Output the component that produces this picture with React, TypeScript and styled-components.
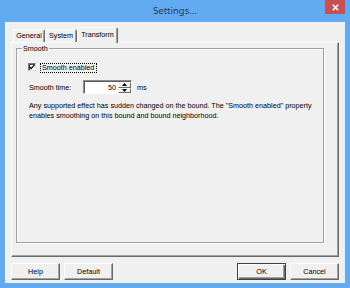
import React from "react";
import styled, { createGlobalStyle, css } from "styled-components";

const Global = createGlobalStyle`
  html, body { margin: 0; padding: 0; }
  body {
    width: 350px;
    height: 288px;
    overflow: hidden;
    font-family: "Liberation Sans", Arial, sans-serif;
  }
`;

const Window = styled.div`
  width: 350px;
  height: 288px;
  box-sizing: border-box;
  background: #62abf2;
  padding: 0 5px 5px;
  display: flex;
  flex-direction: column;
`;

const TitleBar = styled.div`
  height: 22px;
  flex: none;
  display: grid;
  grid-template-columns: 1fr auto 1fr;
  align-items: start;
`;

const Title = styled.div`
  grid-column: 2;
  font-family: "Noto Sans", "Liberation Sans", sans-serif;
  font-size: 9.5px;
  line-height: 21px;
  color: #27374e;
`;

const CloseButton = styled.button`
  grid-column: 3;
  justify-self: end;
  width: 20px;
  height: 14px;
  border: 0;
  padding: 0;
  margin: 0;
  background: #c75050;
  display: flex;
  align-items: center;
  justify-content: center;
`;

const Client = styled.div`
  flex: 1;
  min-height: 0;
  background: #f0f0f0;
  display: flex;
  flex-direction: column;
  padding: 0 6px 3px;
`;

const TabStrip = styled.div`
  height: 20px;
  flex: none;
  display: flex;
  align-items: flex-end;
  padding-left: 2px;
  position: relative;
  z-index: 1;
`;

const Tab = styled.div<{ $active?: boolean; $w: number }>`
  box-sizing: border-box;
  width: ${(p) => p.$w}px;
  height: ${(p) => (p.$active ? 16 : 13)}px;
  margin-bottom: ${(p) => (p.$active ? -1 : 0)}px;
  background: #f0f0f0;
  border-top: 1px solid #fff;
  border-left: 1px solid #fff;
  border-right: 1px solid #696969;
  box-shadow: inset -1px 0 #a0a0a0;
  border-radius: 2px 2px 0 0;
  font-size: 7.2px;
  line-height: ${(p) => (p.$active ? 13 : 12)}px;
  text-align: center;
  white-space: nowrap;
  color: #000;
`;

const Panel = styled.div`
  flex: 1;
  min-height: 0;
  box-sizing: border-box;
  border-top: 1px solid #fff;
  border-left: 1px solid #fff;
  border-right: 1px solid #696969;
  border-bottom: 1px solid #696969;
  box-shadow: inset -1px -1px #a0a0a0;
  display: flex;
  flex-direction: column;
  padding: 1px 14px 13px 4px;
`;

const GroupBox = styled.fieldset`
  flex: 1;
  margin: 0;
  padding: 0;
  min-width: 0;
  border: 1px solid #a0a0a0;
  box-shadow: inset 1px 1px #fff, 1px 1px #fff;
`;

const Legend = styled.legend`
  font-size: 7.2px;
  line-height: 9px;
  padding: 0 1px;
  margin-left: 5px;
  background: #f0f0f0;
  white-space: nowrap;
  color: #000;
`;

const Content = styled.div`
  display: flex;
  flex-direction: column;
  align-items: flex-start;
  padding: 10px 0 0 11px;
  font-size: 7.2px;
  white-space: nowrap;
  color: #000;
`;

const CheckRow = styled.div`
  display: flex;
  align-items: flex-start;
  gap: 4px;
`;

const CheckBox = styled.span`
  flex: none;
  width: 8px;
  height: 8px;
  box-sizing: border-box;
  background: #fff;
  border: 1px solid;
  border-color: #7a7a7a #dcdcdc #dcdcdc #7a7a7a;
  box-shadow: inset 1px 1px #4a4a4a;
  display: flex;
  align-items: center;
  justify-content: center;
`;

const FocusLabel = styled.span`
  flex: none;
  display: inline-block;
  border: 1px dotted #000;
  padding: 0 2px 0 1px;
  line-height: 8px;
`;

const SpinRow = styled.div`
  display: flex;
  align-items: center;
  margin-top: 7px;
  height: 14px;
`;

const FieldLabel = styled.span`
  flex: none;
  width: 54px;
  margin-left: 1px;
`;

const SpinEdit = styled.div`
  flex: none;
  width: 49px;
  height: 14px;
  box-sizing: border-box;
  display: flex;
  background: #fff;
  border: 1px solid;
  border-color: #8c8c8c #fff #fff #8c8c8c;
  box-shadow: inset 1px 1px #5a5a5a;
  padding: 1px 0 0 1px;
`;

const SpinValue = styled.span`
  flex: 1;
  text-align: right;
  line-height: 11px;
  padding-right: 2px;
`;

const SpinButtons = styled.div`
  width: 13px;
  display: flex;
  flex-direction: column;
`;

const SpinButton = styled.span`
  flex: 1;
  box-sizing: border-box;
  background: #f0f0f0;
  border-top: 1px solid #fff;
  border-left: 1px solid #fff;
  border-right: 1px solid #696969;
  border-bottom: 1px solid #696969;
  display: flex;
  align-items: center;
  justify-content: center;
`;

const Unit = styled.span`
  margin-left: 5px;
`;

const Description = styled.p`
  margin: 7px 0 0 1px;
  line-height: 10px;
`;

const ButtonRow = styled.div`
  display: flex;
  gap: 4px;
  margin-top: 6px;
  height: 17px;
  flex: none;
`;

const Spacer = styled.div`
  flex: 1;
`;

const Button = styled.button<{ $default?: boolean }>`
  width: 49px;
  height: 17px;
  box-sizing: border-box;
  padding: 0;
  margin: 0;
  font-family: "Liberation Sans", Arial, sans-serif;
  font-size: 7.2px;
  color: #000;
  background: #f0f0f0;
  border: 1px solid;
  border-color: #fff #696969 #696969 #fff;
  box-shadow: inset -1px -1px #a0a0a0;
  ${(p) =>
    p.$default &&
    css`
      border-color: #404040;
      box-shadow: inset 1px 1px #fff, inset -1px -1px #696969, inset -2px -2px #a0a0a0;
    `}
`;

const Arrow = ({ up }: { up?: boolean }) => (
  <svg width="5" height="3" viewBox="0 0 5 3">
    <polygon points={up ? "2.5,0 5,3 0,3" : "0,0 5,0 2.5,3"} fill="#000" />
  </svg>
);

export default function App() {
  return (
    <>
      <Global />
      <Window>
        <TitleBar>
          <Title>Settings...</Title>
          <CloseButton aria-label="Close">
            <svg width="7" height="7" viewBox="0 0 7 7">
              <path d="M0.8 0.8 L6.2 6.2 M6.2 0.8 L0.8 6.2" stroke="#fff" strokeWidth="1.6" />
            </svg>
          </CloseButton>
        </TitleBar>
        <Client>
          <TabStrip>
            <Tab $w={32}>General</Tab>
            <Tab $w={32}>System</Tab>
            <Tab $w={41} $active>
              Transform
            </Tab>
          </TabStrip>
          <Panel>
            <GroupBox>
              <Legend>Smooth</Legend>
              <Content>
                <CheckRow>
                  <CheckBox>
                    <svg width="6" height="6" viewBox="0 0 6 6">
                      <polyline points="0.5,2.8 2.2,4.6 5.5,0.9" fill="none" stroke="#000" strokeWidth="1.3" />
                    </svg>
                  </CheckBox>
                  <FocusLabel>Smooth enabled</FocusLabel>
                </CheckRow>
                <SpinRow>
                  <FieldLabel>Smooth time:</FieldLabel>
                  <SpinEdit>
                    <SpinValue>50</SpinValue>
                    <SpinButtons>
                      <SpinButton>
                        <Arrow up />
                      </SpinButton>
                      <SpinButton>
                        <Arrow />
                      </SpinButton>
                    </SpinButtons>
                  </SpinEdit>
                  <Unit>ms</Unit>
                </SpinRow>
                <Description>
                  Any supported effect has sudden changed on the bound. The "Smooth enabled" property
                  <br />
                  enables smoothing on this bound and bound neighborhood.
                </Description>
              </Content>
            </GroupBox>
          </Panel>
          <ButtonRow>
            <Button>Help</Button>
            <Button>Default</Button>
            <Spacer />
            <Button $default>OK</Button>
            <Button>Cancel</Button>
          </ButtonRow>
        </Client>
      </Window>
    </>
  );
}
